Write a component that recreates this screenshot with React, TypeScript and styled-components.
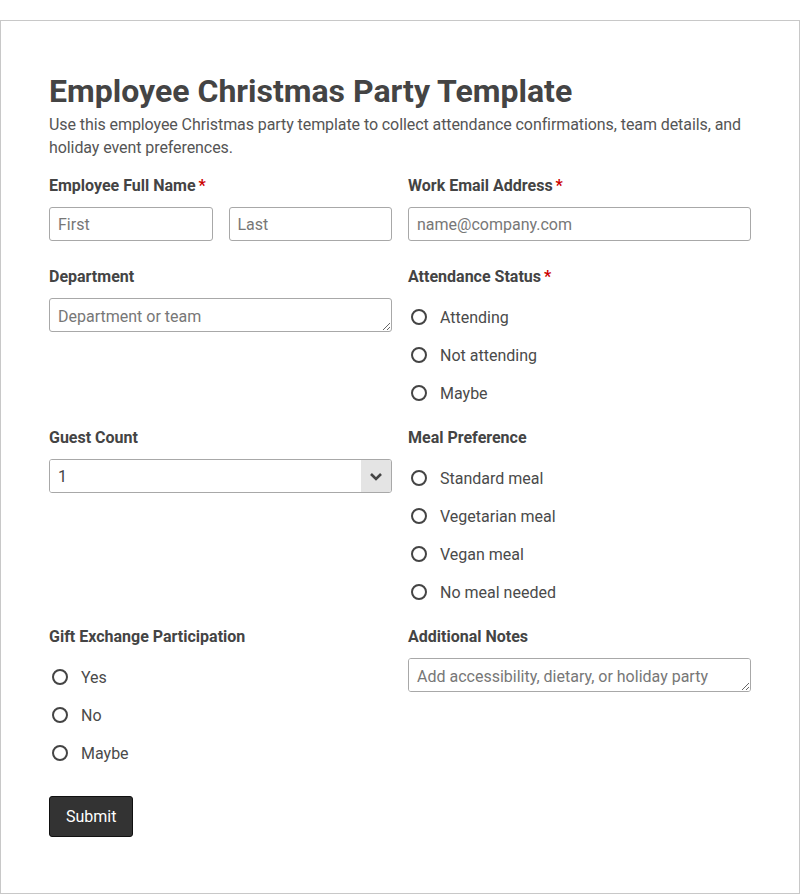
import React from 'react'
import styled, { createGlobalStyle } from 'styled-components'

const GlobalStyle = createGlobalStyle`
  * { box-sizing: border-box; }
  body {
    margin: 0;
    padding-top: 20px;
    background: #fff;
    font-family: Roboto, "Liberation Sans", Arial, sans-serif;
    color: #444;
  }
`

const Form = styled.form`
  border: 1px solid #c8c8c8;
  padding: 48px 48px 0;
  height: 874px;
`

const Title = styled.h1`
  margin: 3px 0 2px;
  font-size: 32px;
  line-height: 38px;
  font-weight: 700;
  color: #444;
`

const Description = styled.p`
  margin: 0 0 15px;
  padding-top: 1px;
  font-size: 16px;
  line-height: 23px;
  letter-spacing: -0.08px;
  color: #555;
`

const Row = styled.div`
  display: grid;
  grid-template-columns: 1fr 1fr;
  column-gap: 16px;
  margin-bottom: 24px;
  align-items: start;
`

const Field = styled.div`
  display: flex;
  flex-direction: column;
  min-width: 0;
`

const Label = styled.label`
  font-size: 16px;
  line-height: 22px;
  font-weight: 700;
  color: #444;
  padding-top: 1px;
  margin-bottom: 10px;
`

const Required = styled.span`
  color: #c00;
  margin-left: 3px;
`

const Pair = styled.div`
  display: grid;
  grid-template-columns: 1fr 1fr;
  column-gap: 16px;
`

const controlBase = `
  width: 100%;
  height: 34px;
  border: 1px solid #a8a8a8;
  border-radius: 3px;
  font-family: Roboto, "Liberation Sans", Arial, sans-serif;
  font-size: 16px;
  color: #444;
  background: #fff;
  padding: 0 8px;
  outline: none;
  &::placeholder { color: #777; }
`

const TextInput = styled.input`
  ${controlBase}
`

const TextArea = styled.textarea`
  ${controlBase}
  display: block;
  padding: 7px 8px 0;
  line-height: 22px;
  resize: vertical;
`

const SelectWrap = styled.div`
  height: 34px;
  border: 1px solid #a8a8a8;
  border-radius: 3px;
  overflow: hidden;
  display: flex;
`

const Select = styled.select`
  flex: 1;
  appearance: none;
  border: none;
  background: #fff;
  font-family: Roboto, "Liberation Sans", Arial, sans-serif;
  font-size: 16px;
  color: #444;
  padding: 0 8px;
  outline: none;
`

const Arrow = styled.span`
  width: 30px;
  background: #e4e4e4;
  display: flex;
  align-items: center;
  justify-content: center;
  pointer-events: none;
`

const RadioList = styled.div`
  display: flex;
  flex-direction: column;
  margin-bottom: -10px;
`

const RadioItem = styled.label`
  display: flex;
  align-items: center;
  height: 38px;
  padding-left: 3px;
  gap: 13px;
  font-size: 16px;
  color: #4a4a4a;
`

const Circle = styled.span`
  width: 16px;
  height: 16px;
  border: 2px solid #444;
  border-radius: 50%;
  flex: none;
`

const Submit = styled.button`
  margin-top: 10px;
  height: 41px;
  padding: 0 16px;
  background: #333;
  color: #fff;
  border: 1px solid #111;
  border-radius: 3px;
  font-family: Roboto, "Liberation Sans", Arial, sans-serif;
  font-size: 16px;
`

function Radios({ options }: { options: string[] }) {
  return (
    <RadioList>
      {options.map((o) => (
        <RadioItem key={o}>
          <Circle />
          {o}
        </RadioItem>
      ))}
    </RadioList>
  )
}

function App() {
  return (
    <>
      <GlobalStyle />
      <Form onSubmit={(e) => e.preventDefault()}>
        <Title>Employee Christmas Party Template</Title>
        <Description>
          Use this employee Christmas party template to collect attendance confirmations, team
          details, and holiday event preferences.
        </Description>

        <Row>
          <Field>
            <Label>
              Employee Full Name<Required>*</Required>
            </Label>
            <Pair>
              <TextInput placeholder="First" />
              <TextInput placeholder="Last" />
            </Pair>
          </Field>
          <Field>
            <Label>
              Work Email Address<Required>*</Required>
            </Label>
            <TextInput placeholder="name@company.com" />
          </Field>
        </Row>

        <Row>
          <Field>
            <Label>Department</Label>
            <TextArea placeholder="Department or team" />
          </Field>
          <Field>
            <Label>
              Attendance Status<Required>*</Required>
            </Label>
            <Radios options={['Attending', 'Not attending', 'Maybe']} />
          </Field>
        </Row>

        <Row>
          <Field>
            <Label>Guest Count</Label>
            <SelectWrap>
              <Select defaultValue="1">
                <option>1</option>
                <option>2</option>
                <option>3</option>
              </Select>
              <Arrow>
                <svg width="14" height="9" viewBox="0 0 14 9">
                  <polyline
                    points="2,2 7,7 12,2"
                    fill="none"
                    stroke="#444"
                    strokeWidth="2.6"
                  />
                </svg>
              </Arrow>
            </SelectWrap>
          </Field>
          <Field>
            <Label>Meal Preference</Label>
            <Radios options={['Standard meal', 'Vegetarian meal', 'Vegan meal', 'No meal needed']} />
          </Field>
        </Row>

        <Row>
          <Field>
            <Label>Gift Exchange Participation</Label>
            <Radios options={['Yes', 'No', 'Maybe']} />
          </Field>
          <Field>
            <Label>Additional Notes</Label>
            <TextArea placeholder="Add accessibility, dietary, or holiday party notes" />
          </Field>
        </Row>

        <Submit type="submit">Submit</Submit>
      </Form>
    </>
  )
}

export default App
